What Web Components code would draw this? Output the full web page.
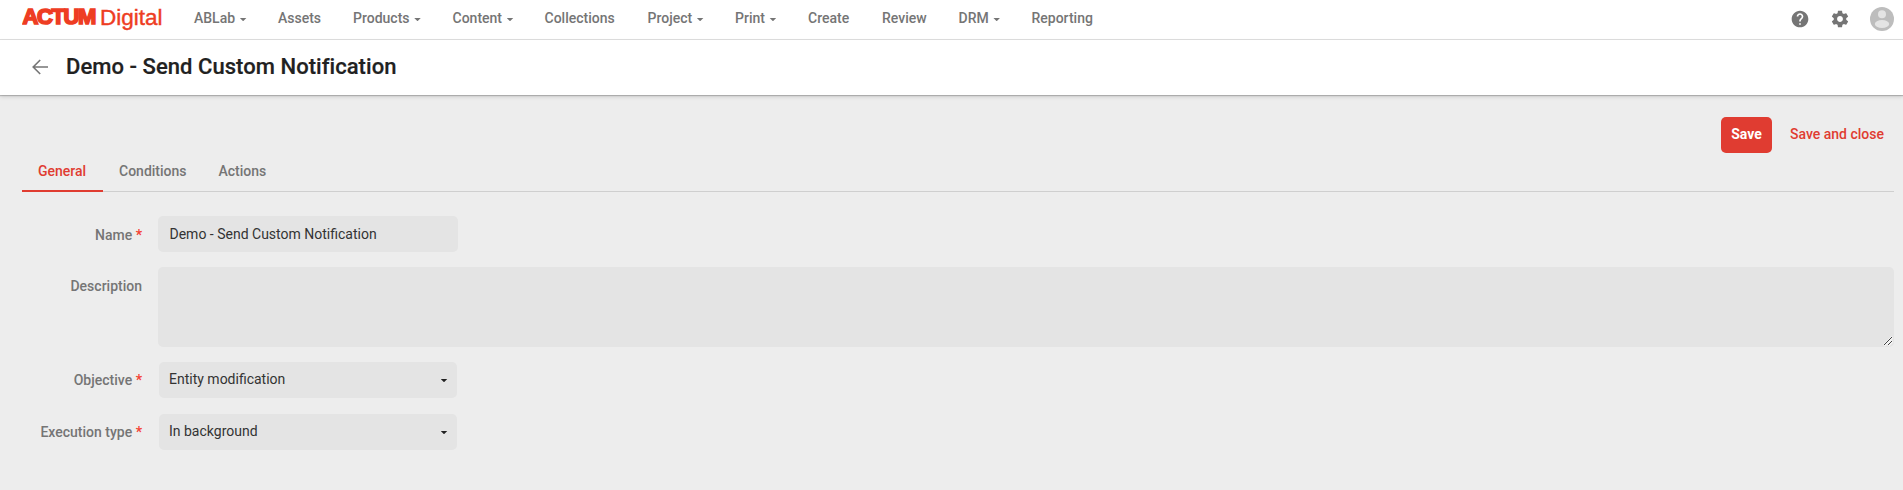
<!DOCTYPE html>
<html lang="en">
<head>
<meta charset="utf-8">
<title>Demo - Send Custom Notification</title>
<style>
body { margin: 0; background: #ededed; font: 400 14px/20px Roboto, sans-serif; color: #212121; }
</style>
</head>
<body>
<app-page></app-page>
<script>
const define = (name, html) => customElements.define(name, class extends HTMLElement {
  constructor() {
    super();
    const t = document.createElement('template');
    t.innerHTML = html;
    this.attachShadow({ mode: 'open' }).append(t.content.cloneNode(true));
  }
});

define('brand-logo', `<style>
:host { display: block; width: 172px; height: 39px; }
svg { display: block; }
text { font-family: "Liberation Sans", sans-serif; fill: #ee3d23; stroke: #ee3d23; }
.heavy { font-weight: 700; font-size: 22px; stroke-width: 1.7px; }
.light { font-size: 22.5px; stroke-width: .4px; }
</style>
<svg width="172" height="39">
<text class="heavy" x="0.4" y="24.2" textLength="74" lengthAdjust="spacing">ACTUM</text>
<text class="light" x="78" y="25" textLength="62.5" lengthAdjust="spacing">Digital</text>
</svg>`);

define('nav-item', `<style>
:host { display: flex; align-items: center; font-weight: 500; color: #757575; white-space: nowrap; height: 30px; }
i { display: none; margin: 3px 0 0 4.5px; width: 7px; height: 3.5px; background: #757575; clip-path: polygon(0 0, 100% 0, 50% 100%); }
:host([menu]) i { display: block; }
</style><slot></slot><i></i>`);

define('top-bar', `<style>
:host { display: flex; box-sizing: border-box; height: 40px; padding: 0 8px 0 22px; background: #fff; border-bottom: 1px solid #dedede; }
nav { display: grid; grid-template-columns: 84px 75px 99.5px 92px 103px 87.5px 73px 74px 76.5px 73px 70px; align-content: start; padding-top: 3px; }
.tools { display: flex; align-items: center; margin-left: auto; height: 38px; }
svg { display: block; }
.help { margin-right: 20px; } .gear { margin-right: 19px; }
</style>
<brand-logo></brand-logo>
<nav>
<nav-item menu>ABLab</nav-item><nav-item>Assets</nav-item><nav-item menu>Products</nav-item><nav-item menu>Content</nav-item><nav-item>Collections</nav-item><nav-item menu>Project</nav-item><nav-item menu>Print</nav-item><nav-item>Create</nav-item><nav-item>Review</nav-item><nav-item menu>DRM</nav-item><nav-item>Reporting</nav-item>
</nav>
<div class="tools">
<svg class="help" width="20" height="20" viewBox="0 0 24 24" fill="#757575"><path d="M12 2C6.48 2 2 6.48 2 12s4.48 10 10 10 10-4.48 10-10S17.52 2 12 2zm1 17h-2v-2h2v2zm2.07-7.75-.9.92C13.45 12.9 13 13.5 13 15h-2v-.5c0-1.1.45-2.1 1.17-2.83l1.24-1.26c.37-.36.59-.86.59-1.41 0-1.1-.9-2-2-2s-2 .9-2 2H8c0-2.21 1.79-4 4-4s4 1.79 4 4c0 .88-.36 1.68-.93 2.25z"/></svg>
<svg class="gear" width="20" height="20" viewBox="0 0 24 24" fill="#757575"><path d="M19.43 12.98c.04-.32.07-.64.07-.98s-.03-.66-.07-.98l2.11-1.65c.19-.15.24-.42.12-.64l-2-3.46c-.12-.22-.39-.3-.61-.22l-2.49 1c-.52-.4-1.08-.73-1.69-.98l-.38-2.65C14.46 2.18 14.25 2 14 2h-4c-.25 0-.46.18-.49.42l-.38 2.65c-.61.25-1.17.59-1.69.98l-2.49-1c-.23-.09-.49 0-.61.22l-2 3.46c-.13.22-.07.49.12.64l2.11 1.65c-.04.32-.07.65-.07.98s.03.66.07.98l-2.11 1.65c-.19.15-.24.42-.12.64l2 3.46c.12.22.39.3.61.22l2.49-1c.52.4 1.08.73 1.69.98l.38 2.65c.03.24.24.42.49.42h4c.25 0 .46-.18.49-.42l.38-2.65c.61-.25 1.17-.59 1.69-.98l2.49 1c.23.09.49 0 .61-.22l2-3.46c.12-.22.07-.49-.12-.64l-2.11-1.65zM12 15.5c-1.93 0-3.5-1.57-3.5-3.5s1.57-3.5 3.5-3.5 3.5 1.57 3.5 3.5-1.57 3.5-3.5 3.5z"/></svg>
<svg width="26" height="26" viewBox="0 0 26 26"><circle cx="13" cy="13" r="12" fill="#bdbdbd"/><circle cx="13" cy="8.2" r="4" fill="#e4e4e4"/><ellipse cx="13" cy="18" rx="7.2" ry="4" fill="#e4e4e4"/></svg>
</div>`);

define('title-bar', `<style>
:host { display: flex; align-items: center; box-sizing: border-box; height: 55px; padding: 0 32px 1px; background: #fff; box-shadow: 0 1px 1px rgba(0,0,0,.2), 0 2px 4px rgba(0,0,0,.12); position: relative; }
h1 { margin: 0 0 0 18px; font-size: 22px; line-height: 28px; font-weight: 500; letter-spacing: .05px; -webkit-text-stroke: .2px #212121; white-space: nowrap; }
</style>
<svg width="16" height="16" viewBox="0 0 16 16" fill="none" stroke="#757575" stroke-width="1.6"><path d="M16 8H1.5M8.2 1 1.2 8l7 7"/></svg>
<h1><slot></slot></h1>`);

define('action-button', `<style>
:host { display: flex; align-items: center; box-sizing: border-box; height: 36px; padding: 0 10px 2px; border-radius: 5px; color: #e03c31; font-weight: 500; white-space: nowrap; }
:host([primary]) { background: #e03c31; color: #fff; font-weight: 700; width: 51px; padding: 0 0 2px; justify-content: center; }
</style><slot></slot>`);

define('tab-item', `<style>
:host { display: block; box-sizing: border-box; height: 41px; padding: 10px 16px 0; font-weight: 500; color: #757575; white-space: nowrap; }
:host([active]) { color: #e03c31; width: 81px; border-bottom: 2px solid #e03c31; }
</style><slot></slot>`);

define('tab-bar', `<style>
:host { display: flex; height: 40px; border-bottom: 1px solid #cfcfcf; }
</style><slot></slot>`);

define('form-row', `<style>
:host { display: grid; grid-template-columns: 120px 1fr; column-gap: 16px; align-items: start; }
.label { font-weight: 500; color: #757575; text-align: right; padding-top: var(--label-top, 9px); white-space: nowrap; }
b { display: none; font-weight: 700; color: #f44336; margin-left: 3.5px; }
:host([required]) b { display: inline; }
</style><div class="label"><slot name="label"></slot><b>*</b></div><slot></slot>`);

define('text-field', `<style>
:host { display: block; box-sizing: border-box; width: 300px; height: 36px; padding: 8px 11.5px; border-radius: 5px; background: #e4e4e4; color: #333; white-space: nowrap; }
</style><slot></slot>`);

define('text-area', `<style>
:host { display: flex; justify-content: flex-end; align-items: flex-end; height: 80px; border-radius: 5px; background: #e4e4e4; }
svg { display: block; }
</style><svg width="12" height="12" fill="none" stroke="#f4f4f4"><path d="M2 10.5 10.5 2M6 10.5l4.5-4.5" stroke-width="2.5"/><path d="M2 10 10 2M6 10l4-4" stroke="#444" stroke-width="1"/></svg>`);

define('select-field', `<style>
:host { display: flex; align-items: center; justify-content: space-between; box-sizing: border-box; width: 298px; height: 36px; margin-left: 1px; padding: 0 9.5px 2px 10px; border-radius: 5px; background: #e4e4e4; color: #333; white-space: nowrap; }
i { width: 7px; height: 3.5px; background: #212121; clip-path: polygon(0 0, 100% 0, 50% 100%); margin-top: 3px; }
</style><slot></slot><i></i>`);

define('app-page', `<style>
:host { display: block; height: 490px; overflow: hidden; }
main { padding: 22px 9px 0 22px; }
.actions { display: flex; justify-content: flex-end; gap: 8px; height: 34px; }
.form { display: grid; gap: 15px; padding-top: 24px; }
.choice { --label-top: 8px; }
.last { margin-top: 1px; }
</style>
<top-bar></top-bar>
<title-bar>Demo - Send Custom Notification</title-bar>
<main>
<div class="actions"><action-button primary>Save</action-button><action-button>Save and close</action-button></div>
<tab-bar><tab-item active>General</tab-item><tab-item>Conditions</tab-item><tab-item>Actions</tab-item></tab-bar>
<div class="form">
<form-row required><span slot="label">Name</span><text-field>Demo - Send Custom Notification</text-field></form-row>
<form-row><span slot="label">Description</span><text-area></text-area></form-row>
<form-row class="choice" required><span slot="label">Objective</span><select-field>Entity modification</select-field></form-row>
<form-row class="choice last" required><span slot="label">Execution type</span><select-field>In background</select-field></form-row>
</div>
</main>`);
</script>
</body>
</html>
